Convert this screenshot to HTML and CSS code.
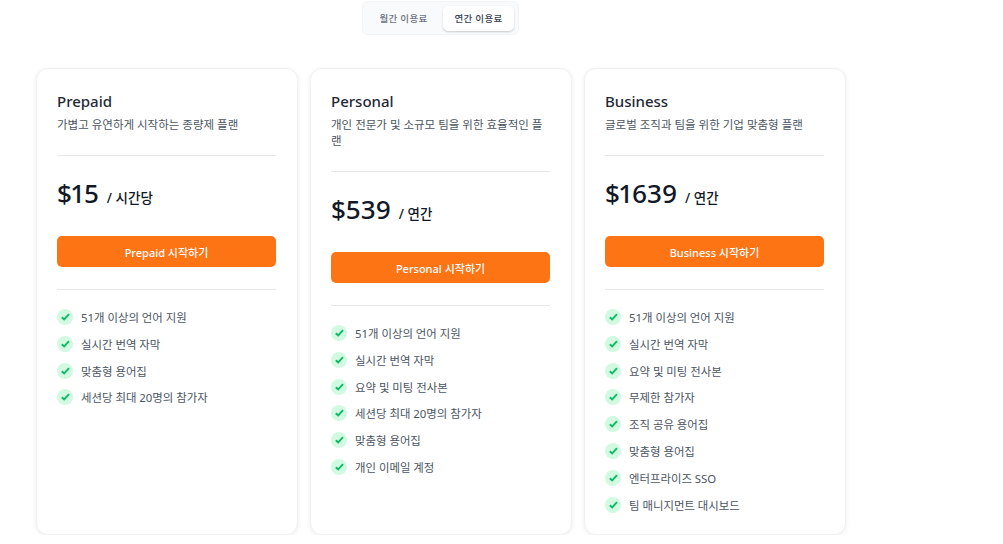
FILE: index.html
```html
<!DOCTYPE html>
<html lang="ko">
<head>
  <meta charset="UTF-8" />
  <title>요금제</title>
  <link rel="stylesheet" href="styles.css">
</head>
<body>
  <svg class="defs" width="0" height="0">
    <symbol id="check" viewBox="0 0 16 16">
      <circle cx="8" cy="8" r="8" fill="#d1fae0" />
      <path d="M4.8 8.2 7.2 10.5 12 5.2" fill="none" stroke="#10b969" stroke-width="1.9" />
    </symbol>
  </svg>

  <div class="page">
    <!-- Billing toggle -->
    <div class="toggle-wrap">
      <div class="toggle">
        <span class="toggle-item">월간 이용료</span>
        <span class="toggle-item active">연간 이용료</span>
      </div>
    </div>

    <!-- Plans -->
    <div class="plans">
      <div class="card">
        <h3>Prepaid</h3>
        <p class="desc">가볍고 유연하게 시작하는 종량제 플랜</p>
        <hr />
        <div class="price"><strong>$15</strong> <span>/ 시간당</span></div>
        <button class="cta">Prepaid 시작하기</button>
        <hr />
        <ul class="features">
          <li><svg><use href="#check" /></svg>51개 이상의 언어 지원</li>
          <li><svg><use href="#check" /></svg>실시간 번역 자막</li>
          <li><svg><use href="#check" /></svg>맞춤형 용어집</li>
          <li><svg><use href="#check" /></svg>세션당 최대 20명의 참가자</li>
        </ul>
      </div>

      <div class="card">
        <h3>Personal</h3>
        <p class="desc">개인 전문가 및 소규모 팀을 위한 효율적인 플랜</p>
        <hr />
        <div class="price"><strong>$539</strong> <span>/ 연간</span></div>
        <button class="cta">Personal 시작하기</button>
        <hr />
        <ul class="features">
          <li><svg><use href="#check" /></svg>51개 이상의 언어 지원</li>
          <li><svg><use href="#check" /></svg>실시간 번역 자막</li>
          <li><svg><use href="#check" /></svg>요약 및 미팅 전사본</li>
          <li><svg><use href="#check" /></svg>세션당 최대 20명의 참가자</li>
          <li><svg><use href="#check" /></svg>맞춤형 용어집</li>
          <li><svg><use href="#check" /></svg>개인 이메일 계정</li>
        </ul>
      </div>

      <div class="card">
        <h3>Business</h3>
        <p class="desc">글로벌 조직과 팀을 위한 기업 맞춤형 플랜</p>
        <hr />
        <div class="price"><strong>$1639</strong> <span>/ 연간</span></div>
        <button class="cta">Business 시작하기</button>
        <hr />
        <ul class="features">
          <li><svg><use href="#check" /></svg>51개 이상의 언어 지원</li>
          <li><svg><use href="#check" /></svg>실시간 번역 자막</li>
          <li><svg><use href="#check" /></svg>요약 및 미팅 전사본</li>
          <li><svg><use href="#check" /></svg>무제한 참가자</li>
          <li><svg><use href="#check" /></svg>조직 공유 용어집</li>
          <li><svg><use href="#check" /></svg>맞춤형 용어집</li>
          <li><svg><use href="#check" /></svg>엔터프라이즈 SSO</li>
          <li><svg><use href="#check" /></svg>팀 매니지먼트 대시보드</li>
        </ul>
      </div>
    </div>
  </div>
</body>
</html>
```

FILE: styles.css
```css
* {
  margin: 0;
  padding: 0;
  box-sizing: border-box;
}

body {
  font-family: "Noto Sans", "Noto Sans CJK KR", sans-serif;
  background-color: #fff;
  color: #111827;
  overflow: hidden;
}

.defs {
  display: block;
  height: 0;
}

.page {
  width: 810px;
  margin-left: 36px;
}

/* Billing toggle */
.toggle-wrap {
  display: flex;
  justify-content: center;
  padding: 1px 1px 0 0;
}
.toggle {
  display: flex;
  gap: 3px;
  padding: 4px 4px 3px;
  background-color: #f9fafb;
  border: 1px solid #f3f4f6;
  border-radius: 6px;
}
.toggle-item {
  width: 73px;
  height: 25px;
  line-height: 25px;
  text-align: center;
  font-size: 9.5px;
  font-weight: 500;
  letter-spacing: 0.3px;
  color: #6b7280;
  border-radius: 5px;
}
.toggle-item.active {
  width: 71px;
  color: #374151;
  background-color: #fff;
  box-shadow: 0 1px 2px rgba(55, 65, 81, 0.25);
}

/* Plans */
.plans {
  display: flex;
  align-items: stretch;
  gap: 12px;
  margin-top: 33px;
}
.card {
  flex: 1;
  height: 467px;
  padding: 20px 21px 20px 20px;
  background-color: #fff;
  border: 1px solid #f0f1f3;
  border-radius: 12px;
  box-shadow: 0 1px 5px rgba(0, 0, 0, 0.07);
}
.card h3 {
  font-size: 15px;
  font-weight: 500;
  line-height: 22px;
  margin-top: 1px;
  color: #1f2937;
}
.desc {
  font-size: 11.5px;
  line-height: 16px;
  color: #4b5563;
  margin-top: 5px;
  word-break: break-all;
}
hr {
  border: none;
  border-top: 1px solid #e5e7eb;
}
.desc + hr {
  margin-top: 22px;
}
.price {
  display: flex;
  align-items: baseline;
  gap: 8px;
  margin-top: 19px;
  line-height: 36px;
}
.price strong {
  font-size: 26px;
  font-weight: 500;
  font-variant-numeric: proportional-nums;
  color: #111827;
}
.price span {
  font-size: 13.5px;
  font-weight: 500;
  color: #111827;
}
.cta {
  display: block;
  width: 100%;
  height: 31px;
  margin-top: 20px;
  border: none;
  border-radius: 5px;
  background-color: #fd7415;
  color: #fff;
  font-family: inherit;
  font-size: 11px;
  font-weight: 500;
}
.cta + hr {
  margin-top: 22px;
}

/* Feature list */
.features {
  list-style: none;
  margin-top: 19px;
}
.features li {
  display: flex;
  align-items: center;
  gap: 8px;
  height: 16px;
  margin-bottom: 10.8px;
  font-size: 11.4px;
  color: #4b5563;
}
.features svg {
  width: 16px;
  height: 16px;
  flex-shrink: 0;
}
```
